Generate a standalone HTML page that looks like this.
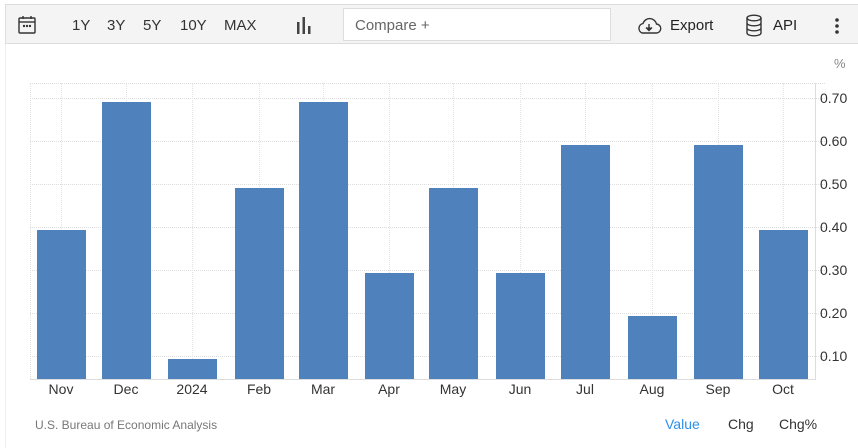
<!DOCTYPE html>
<html><head><style>
body{margin:0;width:858px;height:448px;background:#fff;font-family:"Liberation Sans",Arial,sans-serif;position:relative;overflow:hidden}
.a{position:absolute}
.tb{left:5px;top:4px;width:860px;height:40px;background:#f4f4f4;border:1px solid #ddd;box-sizing:border-box}
.t{font-size:15px;color:#333;top:17px}
.bar{position:absolute;background:#4f81bd;width:49px}
.xl{position:absolute;top:381px;font-size:14px;color:#333;width:60px;text-align:center}
.yl{position:absolute;left:820px;font-size:14px;color:#333}
.hg{position:absolute;left:30px;width:795px;border-top:1px dotted #ddd}
.vg{position:absolute;top:83px;height:296px;border-left:1px dotted #e2e2e2}
</style></head><body>
<div class="a tb"></div>
<div class="a" style="left:5px;top:44px;width:1px;height:404px;background:#eee"></div>
<svg class="a" style="left:17px;top:15px" width="20" height="20" viewBox="0 0 20 20" fill="none" stroke="#333" stroke-width="1.4"><rect x="2" y="3" width="16" height="15" rx="1"/><line x1="2" y1="7" x2="18" y2="7"/><line x1="6" y1="1" x2="6" y2="4"/><line x1="14" y1="1" x2="14" y2="4"/><circle cx="7" cy="11" r=".5" fill="#333"/><circle cx="10" cy="11" r=".5" fill="#333"/><circle cx="13" cy="11" r=".5" fill="#333"/></svg>
<div class="a t" style="left:72px">1Y</div>
<div class="a t" style="left:107px">3Y</div>
<div class="a t" style="left:143px">5Y</div>
<div class="a t" style="left:180px">10Y</div>
<div class="a t" style="left:224px">MAX</div>
<svg class="a" style="left:296px;top:17px" width="16" height="17"><rect x="1" y="5" width="2.5" height="12" fill="#444"/><rect x="6.5" y="0" width="2.5" height="17" fill="#444"/><rect x="12" y="9" width="2.5" height="8" fill="#444"/></svg>
<div class="a" style="left:343px;top:8px;width:268px;height:33px;background:#fff;border:1px solid #ddd;box-sizing:border-box"></div>
<div class="a t" style="left:355px;color:#666">Compare +</div>
<svg class="a" style="left:636px;top:16px" width="26" height="20" viewBox="0 0 26 20" fill="none" stroke="#333" stroke-width="1.4"><path d="M6 17H20a4.5 4.5 0 0 0 .5-9A7 7 0 0 0 7 7.5 5 5 0 0 0 6 17z"/><path d="M13 8v6M10 11.5l3 3 3-3" fill="#333"/></svg>
<div class="a t" style="left:670px;color:#222">Export</div>
<svg class="a" style="left:745px;top:14px" width="18" height="23" viewBox="0 0 18 23" fill="none" stroke="#333" stroke-width="1.4"><ellipse cx="9" cy="4" rx="7" ry="2.8"/><path d="M2 4v15c0 1.6 3.1 2.8 7 2.8s7-1.2 7-2.8V4M2 9c0 1.6 3.1 2.8 7 2.8s7-1.2 7-2.8M2 14c0 1.6 3.1 2.8 7 2.8s7-1.2 7-2.8"/></svg>
<div class="a t" style="left:773px;color:#222">API</div>
<svg class="a" style="left:834px;top:17px" width="6" height="18"><circle cx="3" cy="3" r="1.8" fill="#333"/><circle cx="3" cy="9" r="1.8" fill="#333"/><circle cx="3" cy="15" r="1.8" fill="#333"/></svg>
<div class="a" style="left:834px;top:56px;font-size:13px;color:#888">%</div>
<div class="hg" style="top:83px"></div>
<div class="hg" style="top:98px"></div>
<div class="hg" style="top:141px"></div>
<div class="hg" style="top:184px"></div>
<div class="hg" style="top:227px"></div>
<div class="hg" style="top:270px"></div>
<div class="hg" style="top:313px"></div>
<div class="hg" style="top:356px"></div>
<div class="vg" style="left:30px"></div>
<div class="vg" style="left:61px"></div><div class="vg" style="left:126px"></div><div class="vg" style="left:192px"></div><div class="vg" style="left:259px"></div><div class="vg" style="left:323px"></div><div class="vg" style="left:389px"></div><div class="vg" style="left:453px"></div><div class="vg" style="left:520px"></div><div class="vg" style="left:585px"></div><div class="vg" style="left:652px"></div><div class="vg" style="left:718px"></div><div class="vg" style="left:783px"></div>
<div class="a" style="left:815px;top:83px;width:1px;height:296px;background:#ddd"></div>
<div class="a" style="left:30px;top:379px;width:786px;height:1px;background:#ddd"></div>
<div class="bar" style="left:37px;top:230px;height:149px"></div>
<div class="bar" style="left:102px;top:102px;height:277px"></div>
<div class="bar" style="left:168px;top:359px;height:20px"></div>
<div class="bar" style="left:235px;top:188px;height:191px"></div>
<div class="bar" style="left:299px;top:102px;height:277px"></div>
<div class="bar" style="left:365px;top:273px;height:106px"></div>
<div class="bar" style="left:429px;top:188px;height:191px"></div>
<div class="bar" style="left:496px;top:273px;height:106px"></div>
<div class="bar" style="left:561px;top:145px;height:234px"></div>
<div class="bar" style="left:628px;top:316px;height:63px"></div>
<div class="bar" style="left:694px;top:145px;height:234px"></div>
<div class="bar" style="left:759px;top:230px;height:149px"></div>
<div class="xl" style="left:31px">Nov</div><div class="xl" style="left:96px">Dec</div><div class="xl" style="left:162px">2024</div><div class="xl" style="left:229px">Feb</div><div class="xl" style="left:293px">Mar</div><div class="xl" style="left:359px">Apr</div><div class="xl" style="left:423px">May</div><div class="xl" style="left:490px">Jun</div><div class="xl" style="left:555px">Jul</div><div class="xl" style="left:622px">Aug</div><div class="xl" style="left:688px">Sep</div><div class="xl" style="left:753px">Oct</div>
<div class="yl" style="top:90px">0.70</div><div class="yl" style="top:133px">0.60</div><div class="yl" style="top:176px">0.50</div><div class="yl" style="top:219px">0.40</div><div class="yl" style="top:262px">0.30</div><div class="yl" style="top:305px">0.20</div><div class="yl" style="top:348px">0.10</div>
<div class="a" style="left:35px;top:418px;font-size:12px;color:#777">U.S. Bureau of Economic Analysis</div>
<div class="a" style="left:665px;top:416px;font-size:14px;color:#2f8fe8">Value</div>
<div class="a" style="left:728px;top:416px;font-size:14px;color:#333">Chg</div>
<div class="a" style="left:779px;top:416px;font-size:14px;color:#333">Chg%</div>
</body></html>
